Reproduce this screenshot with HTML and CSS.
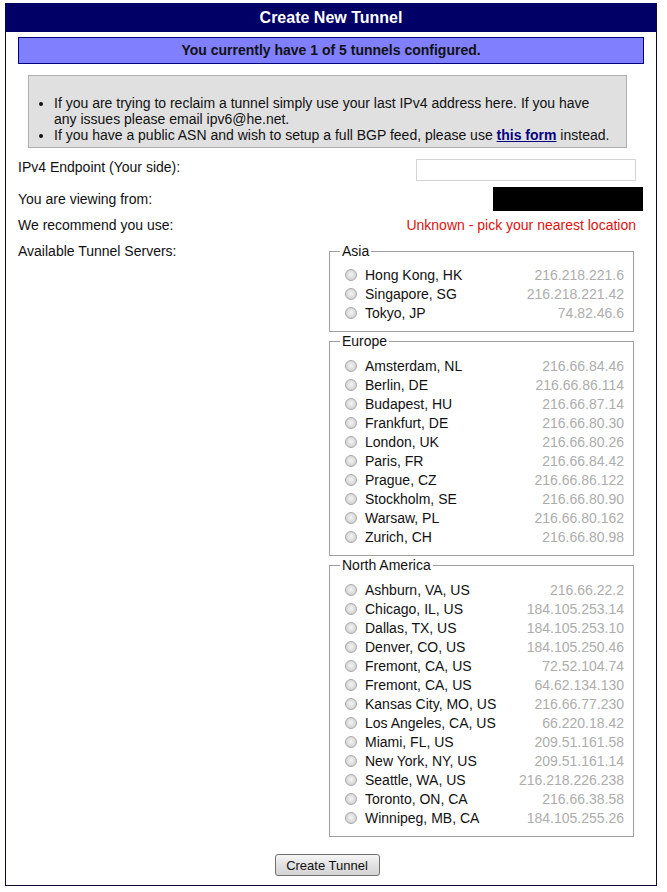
FILE: index.html
```html
<!DOCTYPE html>
<html>
<head>
<meta charset="utf-8">
<title>Create New Tunnel</title>
<link rel="stylesheet" href="styles.css">
</head>
<body>
<div class="page">
  <div class="title">Create New Tunnel</div>
  <div class="status">You currently have 1 of 5 tunnels configured.</div>
  <div class="notice">
    <ul>
      <li>If you are trying to reclaim a tunnel simply use your last IPv4 address here. If you have<br>any issues please email ipv6@he.net.</li>
      <li>If you have a public ASN and wish to setup a full BGP feed, please use <a href="#" class="link">this form</a> instead.</li>
    </ul>
  </div>
  <div class="form">
    <div class="row row-endpoint">
      <span class="label">IPv4 Endpoint (Your side):</span>
      <input class="endpoint" type="text">
    </div>
    <div class="row row-from">
      <span class="label">You are viewing from:</span>
      <span class="redacted"></span>
    </div>
    <div class="row row-rec">
      <span class="label">We recommend you use:</span>
      <span class="rec">Unknown - pick your nearest location</span>
    </div>
    <div class="row row-servers">
      <span class="label">Available Tunnel Servers:</span>
      <div class="servers">
        <fieldset class="region">
          <legend>Asia</legend>
          <label class="srv"><input type="radio" name="tserv"><span class="city">Hong Kong, HK</span><span class="ip">216.218.221.6</span></label>
          <label class="srv"><input type="radio" name="tserv"><span class="city">Singapore, SG</span><span class="ip">216.218.221.42</span></label>
          <label class="srv"><input type="radio" name="tserv"><span class="city">Tokyo, JP</span><span class="ip">74.82.46.6</span></label>
        </fieldset>
        <fieldset class="region">
          <legend>Europe</legend>
          <label class="srv"><input type="radio" name="tserv"><span class="city">Amsterdam, NL</span><span class="ip">216.66.84.46</span></label>
          <label class="srv"><input type="radio" name="tserv"><span class="city">Berlin, DE</span><span class="ip">216.66.86.114</span></label>
          <label class="srv"><input type="radio" name="tserv"><span class="city">Budapest, HU</span><span class="ip">216.66.87.14</span></label>
          <label class="srv"><input type="radio" name="tserv"><span class="city">Frankfurt, DE</span><span class="ip">216.66.80.30</span></label>
          <label class="srv"><input type="radio" name="tserv"><span class="city">London, UK</span><span class="ip">216.66.80.26</span></label>
          <label class="srv"><input type="radio" name="tserv"><span class="city">Paris, FR</span><span class="ip">216.66.84.42</span></label>
          <label class="srv"><input type="radio" name="tserv"><span class="city">Prague, CZ</span><span class="ip">216.66.86.122</span></label>
          <label class="srv"><input type="radio" name="tserv"><span class="city">Stockholm, SE</span><span class="ip">216.66.80.90</span></label>
          <label class="srv"><input type="radio" name="tserv"><span class="city">Warsaw, PL</span><span class="ip">216.66.80.162</span></label>
          <label class="srv"><input type="radio" name="tserv"><span class="city">Zurich, CH</span><span class="ip">216.66.80.98</span></label>
        </fieldset>
        <fieldset class="region">
          <legend>North America</legend>
          <label class="srv"><input type="radio" name="tserv"><span class="city">Ashburn, VA, US</span><span class="ip">216.66.22.2</span></label>
          <label class="srv"><input type="radio" name="tserv"><span class="city">Chicago, IL, US</span><span class="ip">184.105.253.14</span></label>
          <label class="srv"><input type="radio" name="tserv"><span class="city">Dallas, TX, US</span><span class="ip">184.105.253.10</span></label>
          <label class="srv"><input type="radio" name="tserv"><span class="city">Denver, CO, US</span><span class="ip">184.105.250.46</span></label>
          <label class="srv"><input type="radio" name="tserv"><span class="city">Fremont, CA, US</span><span class="ip">72.52.104.74</span></label>
          <label class="srv"><input type="radio" name="tserv"><span class="city">Fremont, CA, US</span><span class="ip">64.62.134.130</span></label>
          <label class="srv"><input type="radio" name="tserv"><span class="city">Kansas City, MO, US</span><span class="ip">216.66.77.230</span></label>
          <label class="srv"><input type="radio" name="tserv"><span class="city">Los Angeles, CA, US</span><span class="ip">66.220.18.42</span></label>
          <label class="srv"><input type="radio" name="tserv"><span class="city">Miami, FL, US</span><span class="ip">209.51.161.58</span></label>
          <label class="srv"><input type="radio" name="tserv"><span class="city">New York, NY, US</span><span class="ip">209.51.161.14</span></label>
          <label class="srv"><input type="radio" name="tserv"><span class="city">Seattle, WA, US</span><span class="ip">216.218.226.238</span></label>
          <label class="srv"><input type="radio" name="tserv"><span class="city">Toronto, ON, CA</span><span class="ip">216.66.38.58</span></label>
          <label class="srv"><input type="radio" name="tserv"><span class="city">Winnipeg, MB, CA</span><span class="ip">184.105.255.26</span></label>
        </fieldset>
      </div>
    </div>
    <div class="actions">
      <button class="submit" type="button">Create Tunnel</button>
    </div>
  </div>
</div>
</body>
</html>
```
FILE: styles.css
```css
html, body {
  margin: 0;
  padding: 0;
  background: #ffffff;
}
body {
  font-family: "Liberation Sans", Arial, sans-serif;
  font-size: 14px;
  color: #111;
}
.page {
  margin: 3px 0 0 5px;
  width: 650px;
  border: 1px solid #0b0b2e;
  border-top: none;
  background: #fff;
}
.title {
  background: #000066;
  color: #fff;
  font-weight: bold;
  font-size: 16px;
  text-align: center;
  height: 29px;
  line-height: 29px;
}
.status {
  margin: 5px 12px 0 12px;
  height: 25px;
  line-height: 25px;
  background: #8080ff;
  border: 1px solid #000080;
  text-align: center;
  font-weight: bold;
  color: #111;
}
.notice {
  margin: 11px 29px 0 22px;
  background: #e0e0e0;
  border: 1px solid #b0b0b0;
}
.notice ul {
  margin: 0;
  padding: 19px 4px 4px 25px;
  line-height: 16px;
}
.link {
  color: #000080;
  font-weight: bold;
  text-decoration: underline;
}
.form {
  margin: 0 13px 9px 12px;
}
.row {
  display: flex;
  justify-content: space-between;
  line-height: 16px;
}
.row-endpoint {
  margin-top: 11px;
  align-items: flex-start;
}
.endpoint {
  box-sizing: border-box;
  width: 220px;
  height: 22px;
  margin: 0 7px 0 0;
  border: 1px solid #d4d4d4;
  padding: 2px;
  font: inherit;
}
.row-from {
  margin-top: 6px;
  align-items: center;
}
.redacted {
  display: block;
  width: 150px;
  height: 24px;
  background: #000;
}
.row-rec {
  margin-top: 6px;
}
.rec {
  color: #dd1111;
  margin-right: 7px;
}
.row-servers {
  margin-top: 10px;
  align-items: flex-start;
}
.servers {
  width: 305px;
  margin-right: 9px;
}
.region {
  margin: 0 0 1px 0;
  padding: 7px 9px 9px 10px;
  border: 1px solid #a0a0a0;
  min-width: 0;
}
.region:first-child {
  padding-top: 6px;
}
.region legend {
  padding: 0 2px;
  line-height: 16px;
  color: #111;
}
.srv {
  display: flex;
  align-items: center;
  height: 19px;
  padding-left: 5px;
}
.srv input[type="radio"] {
  appearance: none;
  -webkit-appearance: none;
  box-sizing: border-box;
  width: 12px;
  height: 12px;
  margin: 0 8px 0 0;
  border-radius: 50%;
  border: 1px solid #a8a8a8;
  background: radial-gradient(circle at 50% 45%, #f4f4f4 0%, #dcdcdc 55%, #c4c4c4 100%);
  flex: none;
}
.city {
  flex: 1;
  color: #111;
}
.ip {
  color: #adadad;
}
.actions {
  width: 618px;
  text-align: center;
  margin-top: 16px;
}
.submit {
  font-family: "Liberation Sans", Arial, sans-serif;
  font-size: 13px;
  height: 22px;
  width: 105px;
  padding: 0;
  color: #111;
  border: 1px solid #707070;
  border-radius: 3px;
  background: linear-gradient(#f6f6f6, #e2e2e2 50%, #d4d4d4);
}
```
